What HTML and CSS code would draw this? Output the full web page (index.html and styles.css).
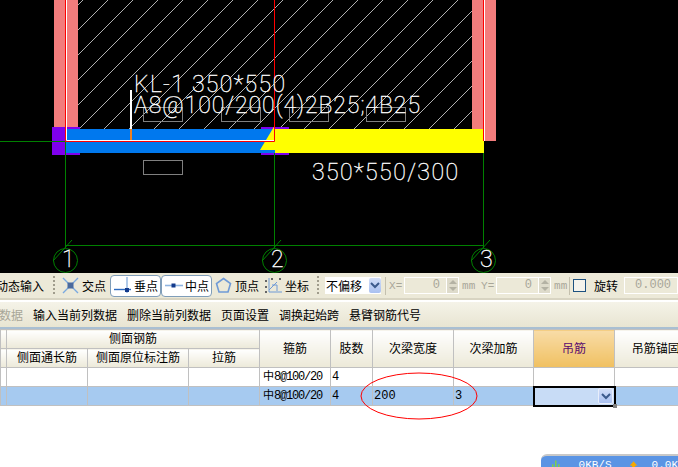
FILE: index.html
```html
<!DOCTYPE html>
<html lang="zh-CN">

<head>
    <meta charset="UTF-8">
    <title>梁平法表格</title>
    <link rel="stylesheet" href="styles.css">
</head>

<body>
    <div class="cad-view">
        <svg class="cad-svg" width="678" height="273" viewBox="0 0 678 273">
            <defs>
                <pattern id="hatch" width="25" height="25" patternUnits="userSpaceOnUse" patternTransform="translate(8 0)">
                    <path d="M-1 26L26 -1M-1 1L1 -1M24 26L26 24" stroke="#b0b0b0" stroke-width="1" fill="none" shape-rendering="crispEdges" />
                </pattern>
            </defs>
            <rect x="78" y="0" width="394" height="129" fill="url(#hatch)" />
            <!-- columns -->
            <rect x="54" y="0" width="24" height="128" fill="#f27c7c" />
            <rect x="472" y="0" width="24" height="141" fill="#f27c7c" />
            <!-- beams -->
            <rect x="52" y="127" width="28" height="28" fill="#7f00ee" />
            <rect x="261" y="127" width="28" height="28" fill="#7f00ee" />
            <rect x="66" y="129" width="209" height="24" fill="#0078ee" />
            <rect x="275" y="129" width="209" height="24" fill="#ffff00" />
            <polygon points="260,150 275,125 275,150" fill="#ffff00" />
            <!-- axis -->
            <g stroke="#008000" fill="none">
                <path d="M0 141.5H65M65.5 141V248M274.5 153V248M483.5 153V248M65 245.5H484" />
                <circle cx="65.5" cy="260.500" r="12" />
                <circle cx="274.5" cy="260.500" r="12" />
                <circle cx="483.5" cy="260.500" r="12" />
                <path d="M53 261L72 240M262 261L281 240M471 261L490 240" />
            </g>
            <path d="M65.5 0V141.5H274.5M274.5 0V141.5M483.5 0V141" stroke="#ff0000" fill="none" />
            <path d="M66.5 0V140.5H274M484.5 0V141" stroke="#ffffff" fill="none" />
            <rect x="130" y="90" width="2" height="40" fill="#ffffff" />
            <rect x="130" y="129" width="2" height="11" fill="#f08020" />
            <!-- openings -->
            <g stroke="#808080" fill="none">
                <rect x="143.5" y="107.5" width="39" height="14" />
                <rect x="221.5" y="107.5" width="39" height="14" />
                <rect x="289.5" y="107.5" width="39" height="14" />
                <rect x="366.5" y="107.5" width="39" height="14" />
                <rect x="143.5" y="160.5" width="39" height="14" />
            </g>
            <text class="cad-text" x="134" y="92" textLength="151">KL-1 350*550</text>
            <text class="cad-text" x="134" y="113" textLength="286">A8@100/200(4)2B25;4B25</text>
            <text class="cad-text" x="312" y="180" textLength="146">350*550/300</text>
            <text class="cad-text" x="62" y="267">1</text>
            <text class="cad-text" x="271" y="267">2</text>
            <text class="cad-text" x="480" y="267">3</text>
        </svg>
    </div>

    <div class="snap-bar">
        <span class="snap-text snap-first">动态输入</span>
        <span class="grip"></span>
        <span class="snap-item">
            <svg width="17" height="17" viewBox="0 0 17 17">
                <path d="M1 1L16 16M16 1L1 16" stroke="#7aa9e0" stroke-width="1.4" fill="none" />
                <rect x="5.5" y="5.5" width="6" height="6" fill="#4a6a9e" />
            </svg>
            <span class="snap-text">交点</span>
        </span>
        <span class="snap-btn">
            <svg width="18" height="17" viewBox="0 0 18 17">
                <path d="M0 12.5H17" stroke="#2f6cc0" stroke-width="1.4" />
                <path d="M13 0V16" stroke="#8fb4e0" stroke-width="1.4" />
                <rect x="11" y="11" width="4" height="4" fill="#123a8c" />
            </svg>
            <span class="snap-text">垂点</span>
        </span>
        <span class="snap-btn snap-btn-mid">
            <svg width="18" height="17" viewBox="0 0 18 17">
                <path d="M0 8.5H18" stroke="#8fb4e0" stroke-width="1.6" />
                <rect x="6.500" y="6.500" width="4" height="4" fill="#123a8c" />
            </svg>
            <span class="snap-text">中点</span>
        </span>
        <span class="snap-item snap-top">
            <svg width="17" height="17" viewBox="0 0 17 17">
                <polygon points="8.500,1.500 15.500,6.500 13,15 4,15 1.500,6.500" stroke="#6f9ad6" stroke-width="1.600" fill="none" />
            </svg>
            <span class="snap-text">顶点</span>
        </span>
        <span class="snap-item snap-coord">
            <svg width="18" height="17" viewBox="0 0 18 17">
                <path d="M4 1V15H17M4 13L12 5M7 8H12V14" stroke="#6f9ad6" fill="none" />
                <g fill="#666666">
                    <rect x="0" y="3" width="2" height="2" />
                    <rect x="6" y="1" width="2" height="2" />
                    <rect x="14" y="1" width="2" height="2" />
                    <rect x="0" y="9" width="2" height="2" />
                    <rect x="0" y="14" width="2" height="2" />
                </g>
            </svg>
            <span class="snap-text">坐标</span>
        </span>
        <span class="grip grip-second"></span>
        <span class="offset-select">
            <span class="snap-text">不偏移</span>
            <span class="drop-btn">
                <svg width="10" height="7" viewBox="0 0 10 7">
                    <path d="M1 1L5 5L9 1" stroke="#3c5a8c" stroke-width="2" fill="none" />
                </svg>
            </span>
        </span>
        <span class="bar-sep"></span>
        <span class="axis-label">X=</span>
        <span class="num-input">0</span>
        <span class="spin"><i class="spin-up"></i><i class="spin-down"></i></span>
        <span class="axis-label unit">mm</span>
        <span class="axis-label axis-y">Y=</span>
        <span class="num-input">0</span>
        <span class="spin"><i class="spin-up"></i><i class="spin-down"></i></span>
        <span class="axis-label unit">mm</span>
        <span class="bar-sep bar-sep-last"></span>
        <span class="check-box"></span>
        <span class="snap-text rotate-label">旋转</span>
        <span class="num-input num-rotate">0.000</span>
    </div>

    <div class="menu-bar">
        <span class="menu-off">数据</span>
        <span>输入当前列数据</span>
        <span>删除当前列数据</span>
        <span>页面设置</span>
        <span>调换起始跨</span>
        <span>悬臂钢筋代号</span>
    </div>

    <table class="beam-table">
        <colgroup>
            <col class="c-0">
            <col class="c-1">
            <col class="c-2">
            <col class="c-3">
            <col class="c-4">
            <col class="c-5">
            <col class="c-6">
            <col class="c-7">
            <col class="c-8">
            <col class="c-9">
        </colgroup>
        <thead>
            <tr class="head-row">
                <th></th>
                <th colspan="3">侧面钢筋</th>
                <th rowspan="2">箍筋</th>
                <th rowspan="2">肢数</th>
                <th rowspan="2">次梁宽度</th>
                <th rowspan="2">次梁加筋</th>
                <th rowspan="2" class="th-active">吊筋</th>
                <th rowspan="2" class="th-last">吊筋锚固</th>
            </tr>
            <tr class="head-row">
                <th></th>
                <th>侧面通长筋</th>
                <th>侧面原位标注筋</th>
                <th>拉筋</th>
            </tr>
        </thead>
        <tbody>
            <tr class="data-row">
                <td></td>
                <td></td>
                <td></td>
                <td></td>
                <td class="td-stirrup"><span class="phi">中</span>8@100/20</td>
                <td>4</td>
                <td></td>
                <td></td>
                <td></td>
                <td></td>
            </tr>
            <tr class="data-row row-selected">
                <td></td>
                <td></td>
                <td></td>
                <td></td>
                <td class="td-stirrup"><span class="phi">中</span>8@100/20</td>
                <td>4</td>
                <td>200</td>
                <td>3</td>
                <td class="cell-active">
                    <span class="cell-drop">
                        <svg width="10" height="7" viewBox="0 0 10 7">
                            <path d="M1 1L5 5L9 1" stroke="#3c5a8c" stroke-width="2" fill="none" />
                        </svg>
                    </span>
                    <span class="cell-handle"></span>
                </td>
                <td></td>
            </tr>
        </tbody>
    </table>

    <!-- hand drawn mark over the table -->
    <svg class="red-mark" width="120" height="50" viewBox="0 0 120 50">
        <ellipse cx="60" cy="25" rx="58" ry="23" stroke="#ff0000" fill="none" />
    </svg>

    <div class="net-popup">
        <svg width="10" height="12" viewBox="0 0 10 12">
            <path d="M5 0V12M1 5V12M9 5V12" stroke="#7ed04a" stroke-width="2" />
        </svg>
        <span class="net-speed">0KB/S</span>
        <svg class="net-up" width="12" height="12" viewBox="0 0 12 12">
            <path d="M6 1L11 7H8V12H4V7H1Z" fill="#f5a800" />
        </svg>
        <span class="net-speed net-last">0.0K</span>
    </div>
</body>

</html>
```

FILE: styles.css
```css
body {
    margin: 0;
    width: 678px;
    height: 467px;
    overflow: hidden;
    position: relative;
    background: #fff;
    font-family: "Noto Sans CJK SC", sans-serif;
    font-size: 12px;
    color: #000;
}

.cad-view {
    height: 273px;
    background: #000;
}

.cad-svg {
    display: block;
}

.cad-text {
    font-family: "Roboto", sans-serif;
    font-weight: 100;
    font-size: 23px;
    fill: #fff;
    stroke: #fff;
    stroke-width: 0.35px;
}

/* snap toolbar */
.snap-bar {
    height: 25px;
    display: flex;
    align-items: center;
    background: #ece9d8;
    border-bottom: 2px solid #d8d4c2;
    white-space: nowrap;
    overflow: hidden;
}

.snap-text {
    line-height: 16px;
}

.snap-first {
    margin-left: -4px;
}

.grip {
    width: 2px;
    height: 19px;
    margin-left: 9px;
    background: repeating-linear-gradient(#a09c8c 0 2px, transparent 2px 4px);
}

.grip-second {
    margin-left: 8px;
}

.snap-item {
    display: flex;
    align-items: center;
    gap: 3px;
    margin-left: 7px;
}

.snap-btn {
    display: flex;
    align-items: center;
    gap: 2px;
    box-sizing: border-box;
    width: 51px;
    height: 22px;
    padding-left: 3px;
    margin-left: 4px;
    background: #fff;
    border: 1px solid #7f9db9;
    border-radius: 4px;
}

.snap-btn-mid {
    margin-left: 0;
}

.snap-top {
    margin-left: 3px;
}

.snap-coord {
    margin-left: 6px;
    gap: 2px;
}

.offset-select {
    display: flex;
    align-items: center;
    justify-content: space-between;
    box-sizing: border-box;
    width: 56px;
    height: 17px;
    margin-left: 6px;
    padding-left: 1px;
    background: #fff;
}

.drop-btn,
.cell-drop {
    display: flex;
    align-items: center;
    justify-content: center;
    width: 12px;
    height: 15px;
    background: linear-gradient(#d2def8, #a9c0f0);
    border-radius: 2px;
}

.bar-sep {
    width: 1px;
    height: 18px;
    margin-left: 4px;
    background: #c4c0ae;
}

.axis-label {
    font-family: "Liberation Mono", monospace;
    font-size: 11px;
    color: #a8a698;
    width: 12px;
    margin-left: 3px;
}

.unit {
    margin-left: 3px;
}

.axis-y {
    margin-left: 7px;
}

.num-input {
    box-sizing: border-box;
    width: 42px;
    height: 17px;
    margin-left: 3px;
    padding-right: 6px;
    border: 1px solid #fff;
    border-right: 0;
    text-align: right;
    line-height: 15px;
    font-family: "Liberation Mono", monospace;
    color: #a8a698;
}

.num-rotate {
    width: 54px;
    margin-left: 6px;
    border-right: 1px solid #fff;
}

.spin {
    display: flex;
    flex-direction: column;
    align-items: center;
    justify-content: center;
    gap: 3px;
    box-sizing: border-box;
    width: 13px;
    height: 17px;
    background: #dedbcb;
    border: 1px solid #fff;
}

.spin i {
    width: 0;
    height: 0;
    border-left: 4px solid transparent;
    border-right: 4px solid transparent;
}

.spin-up {
    border-bottom: 4px solid #b4b2a4;
}

.spin-down {
    border-top: 4px solid #b4b2a4;
}

.bar-sep-last {
    margin-left: 3px;
}

.check-box {
    box-sizing: border-box;
    width: 13px;
    height: 13px;
    margin-left: 3px;
    background: #f4f3ec;
    border: 1px solid #1c5180;
}

.rotate-label {
    margin-left: 8px;
}

/* second toolbar */
.menu-bar {
    height: 25px;
    margin-top: 2px;
    display: flex;
    align-items: center;
    gap: 10px;
    background: linear-gradient(#f5f3e8, #e8e5d2);
    border-bottom: 2px solid #a9bfd2;
    white-space: nowrap;
}

.menu-off {
    margin-left: -1px;
    color: #a8a698;
}

/* beam table */
.beam-table {
    border-collapse: collapse;
    table-layout: fixed;
    width: 696px;
}

.c-0 { width: 6px; }
.c-1 { width: 81px; }
.c-2 { width: 101px; }
.c-3,
.c-4 { width: 71px; }
.c-5 { width: 42px; }
.c-6 { width: 81px; }
.c-7 { width: 80px; }
.c-8 { width: 81px; }
.c-9 { width: 82px; }

.beam-table th,
.beam-table td {
    border: 1px solid #c0c0c0;
    padding: 0;
    overflow: hidden;
    white-space: nowrap;
}

.beam-table th {
    font-weight: 400;
    line-height: 16px;
    padding-bottom: 2px;
    background: linear-gradient(#ffffff, #ece9d8);
}

.beam-table th.th-active {
    background: linear-gradient(#f8dca8, #f0c060);
    color: #5a0a6e;
}

.beam-table th.th-last {
    border-right: 0;
    text-align: center;
}

.head-row {
    height: 19px;
}

.data-row {
    height: 19px;
}

.beam-table td {
    padding-left: 1px;
    font-family: "Liberation Mono", "Noto Sans CJK SC", monospace;
    line-height: 16px;
}

.beam-table td:first-child {
    padding-left: 0;
}

.beam-table .td-stirrup {
    padding-left: 3px;
    letter-spacing: -1.2px;
}

.phi {
    font-size: 11px;
    letter-spacing: 0;
}

.row-selected td {
    background: #a6caf0;
}

.row-selected td.cell-active {
    position: relative;
    overflow: visible;
    outline: 2px solid #000;
    outline-offset: -1px;
    background: #c8dcf6;
}

.cell-drop {
    position: absolute;
    right: 1px;
    top: 1px;
    width: 15px;
    height: 16px;
    border: 1px solid #e8eefb;
    box-sizing: border-box;
}

.cell-handle {
    position: absolute;
    right: -3px;
    bottom: -3px;
    width: 4px;
    height: 4px;
    background: #808080;
}

.red-mark {
    position: absolute;
    left: 359px;
    top: 371px;
}

.net-popup {
    position: absolute;
    left: 541px;
    top: 454px;
    width: 137px;
    height: 13px;
    box-sizing: border-box;
    display: flex;
    align-items: flex-start;
    padding: 3px 0 0 11px;
    background: #5a94e4;
    border-top: 2px solid #c8c8c8;
    border-top-left-radius: 6px;
    overflow: hidden;
}

.net-speed {
    font-family: "Liberation Mono", monospace;
    font-size: 11px;
    line-height: 12px;
    color: #fff;
    margin-left: 19px;
}

.net-up {
    margin-left: 17px;
}

.net-last {
    margin-left: 14px;
}
```
